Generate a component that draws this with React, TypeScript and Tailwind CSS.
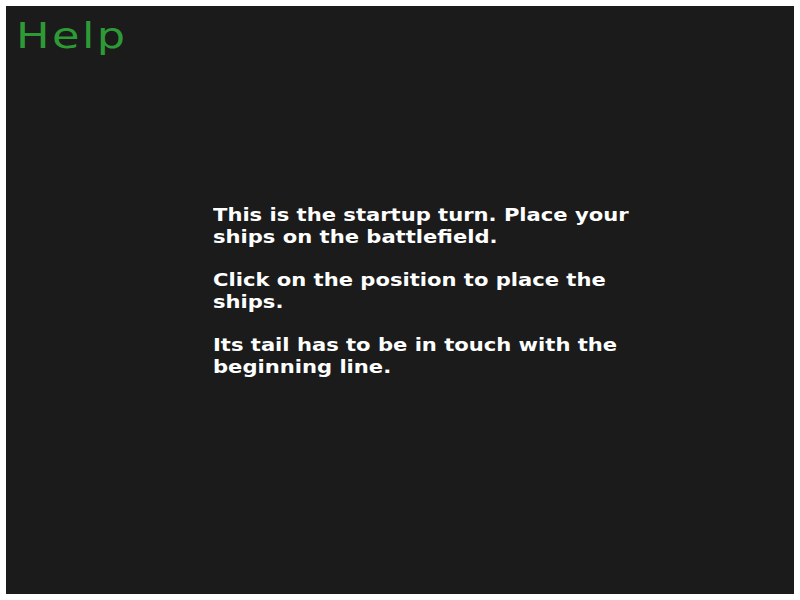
export default function App() {
  const paragraphs = [
    "This is the startup turn. Place your ships on the battlefield.",
    "Click on the position to place the ships.",
    "Its tail has to be in touch with the beginning line.",
  ];

  return (
    <div className="w-[800px] h-[600px] bg-white p-[6px]">
      <div className="w-full h-full bg-[#1b1b1b] flex flex-col font-['DejaVu_Sans',sans-serif]">
        <h1 className="self-start text-[#2e9a36] text-[36px] leading-none font-normal tracking-[2px] pl-[8px] pt-[12px] origin-left scale-x-[1.24]">
          Help
        </h1>
        <div className="mt-[150px] pl-[207px] self-start">
          <div className="w-[350px] flex flex-col gap-[21px] text-white text-[17px] leading-[22px] font-bold origin-left scale-x-[1.24]">
            {paragraphs.map((p, i) => (
              <p key={i}>{p}</p>
            ))}
          </div>
        </div>
      </div>
    </div>
  );
}
